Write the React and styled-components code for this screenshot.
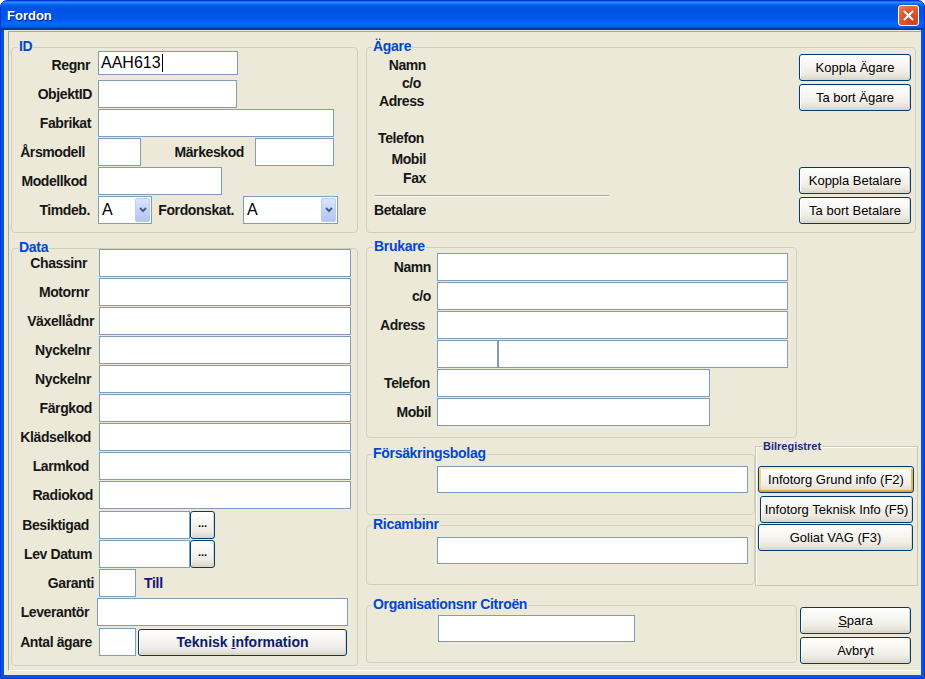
import React from "react";
import styled, { createGlobalStyle } from "styled-components";

const GlobalStyle = createGlobalStyle`
  html, body {
    margin: 0;
    padding: 0;
    background: #ffffff;
    overflow: hidden;
  }
  body {
    font-family: "Liberation Sans", Arial, sans-serif;
  }
`;

const Window = styled.div`
  width: 925px;
  height: 679px;
  box-sizing: border-box;
  display: flex;
  flex-direction: column;
  background: #0055e5;
  border: 1px solid #0831d9;
  border-radius: 7px 7px 0 0;
  overflow: hidden;
  font-family: "Liberation Sans", Arial, sans-serif;
`;

const TitleBar = styled.div`
  flex: none;
  height: 29px;
  display: flex;
  align-items: center;
  justify-content: space-between;
  padding: 0 5px 0 6px;
  background: linear-gradient(
    to bottom,
    #0058ee 0%,
    #3593ff 4%,
    #288eff 6%,
    #127dff 8%,
    #036ffc 10%,
    #0262ee 14%,
    #0057e5 20%,
    #0054e3 24%,
    #0055eb 56%,
    #005bf5 66%,
    #026afe 76%,
    #0062ef 86%,
    #0052d6 92%,
    #0040ab 94%,
    #003092 100%
  );
`;

const Title = styled.span`
  color: #ffffff;
  font-weight: bold;
  font-size: 13px;
  text-shadow: 1px 1px 0 #0a1e6e;
`;

const CloseButton = styled.div`
  width: 21px;
  height: 21px;
  box-sizing: border-box;
  border: 1px solid #ffffff;
  border-radius: 3px;
  background: radial-gradient(circle at 70% 80%, #c9411d 0%, #e0572f 55%, #ec8563 100%);
  display: flex;
  align-items: center;
  justify-content: center;
`;

const Client = styled.div`
  flex: 1;
  display: flex;
  flex-direction: column;
  margin: 0 3px 3px;
  background: #ece9d8;
`;

const Panel = styled.div`
  flex: 1;
  display: flex;
  gap: 8px;
  margin: 1px 0 4px 4px;
  padding: 15px 0 0 2px;
  border-top: 1px solid #aca899;
  border-left: 1px solid #aca899;
  border-bottom: 1px solid #ffffff;
`;

const Column = styled.div`
  width: ${(p) => p.$w}px;
  flex: none;
  display: flex;
  flex-direction: column;
`;

const HStack = styled.div`
  display: flex;
  align-items: flex-start;
  margin-top: ${(p) => p.$mt || 0}px;
`;

const VStack = styled.div`
  display: flex;
  flex-direction: column;
  align-items: flex-start;
  margin-left: ${(p) => p.$ml || 0}px;
  padding-top: ${(p) => p.$pt || 0}px;
`;

const Group = styled.div`
  width: ${(p) => p.$w}px;
  height: ${(p) => p.$h}px;
  box-sizing: border-box;
  flex: none;
  margin-top: ${(p) => p.$mt || 0}px;
  border: 1px solid ${(p) => (p.$square ? "#c9c6b6" : "#d0d0bf")};
  border-radius: ${(p) => (p.$square ? 0 : 4)}px;
  box-shadow: ${(p) => (p.$square ? "inset 1px 1px 0 #ffffff" : "none")};
  display: flex;
  flex-direction: column;
`;

const Legend = styled.div`
  width: fit-content;
  height: ${(p) => (p.$small ? 12 : 14)}px;
  line-height: ${(p) => (p.$small ? 12 : 14)}px;
  margin: ${(p) => (p.$small ? "-7px 0 -5px" : "-9px 0 -5px")} ${(p) => p.$ml}px;
  padding: 0 1px;
  background: #ece9d8;
  font-weight: bold;
  font-size: ${(p) => (p.$small ? 11 : 14)}px;
  letter-spacing: ${(p) => (p.$small ? 0 : -0.3)}px;
  color: ${(p) => (p.$small ? "#1f2a86" : "#0046d5")};
  white-space: nowrap;
`;

const FieldList = styled.div`
  display: flex;
  flex-direction: column;
  gap: 1px;
  padding-top: ${(p) => p.$pt || 0}px;
`;

const Row = styled.div`
  display: flex;
  align-items: center;
  height: 28px;
  margin-top: ${(p) => p.$mt || 0}px;
`;

const Label = styled.span`
  flex: none;
  width: ${(p) => p.$w}px;
  padding-right: ${(p) => p.$pr ?? 7}px;
  box-sizing: border-box;
  text-align: right;
  font-weight: bold;
  font-size: 14px;
  letter-spacing: -0.4px;
  color: #161616;
  white-space: nowrap;
`;

const Note = styled.span`
  margin-left: ${(p) => p.$ml || 0}px;
  font-weight: bold;
  font-size: 14px;
  letter-spacing: -0.3px;
  color: #14147c;
`;

const TextBox = styled.div`
  flex: none;
  width: ${(p) => p.$w}px;
  height: ${(p) => p.$h || 28}px;
  align-self: ${(p) => (p.$top ? "flex-start" : "auto")};
  margin-left: ${(p) => p.$ml || 0}px;
  box-sizing: border-box;
  border: 1px solid #7f9db9;
  background: #ffffff;
  display: flex;
  align-items: center;
  padding-left: 2px;
  font-size: 16px;
  color: #000000;
`;

const Caret = styled.span`
  width: 1px;
  height: 18px;
  margin-left: 1px;
  background: #000000;
`;

const Combo = styled.div`
  flex: none;
  width: ${(p) => p.$w}px;
  height: 28px;
  box-sizing: border-box;
  border: 1px solid #7f9db9;
  background: #ffffff;
  display: flex;
  align-items: stretch;
  padding: 1px;
`;

const ComboValue = styled.span`
  flex: 1;
  display: flex;
  align-items: center;
  padding-left: 2px;
  font-size: 16px;
  color: #000000;
`;

const ComboArrow = styled.span`
  width: 15px;
  box-sizing: border-box;
  border: 1px solid #bccbf4;
  border-radius: 2px;
  background: linear-gradient(to bottom, #dbe5fd 0%, #c4d3fa 50%, #b3c5f4 100%);
  display: flex;
  align-items: center;
  justify-content: center;
`;

const Button = styled.button`
  flex: none;
  width: ${(p) => p.$w}px;
  height: ${(p) => p.$h || 27}px;
  margin: ${(p) => p.$mt || 0}px 0 0 ${(p) => p.$ml || 0}px;
  padding: 0;
  box-sizing: border-box;
  border: 1px solid #003c74;
  border-radius: 3px;
  background: linear-gradient(
    to bottom,
    #ffffff 0%,
    #f8f7f3 35%,
    #efede6 70%,
    #e4e1d6 88%,
    #d6d0c5 100%
  );
  box-shadow: ${(p) =>
    p.$focused
      ? "inset 0 2px 0 #fde7a8, inset 0 -2px 0 #e8a633, inset 2px 0 0 #f9cd70, inset -2px 0 0 #f1b440"
      : "inset 1px 1px 0 #ffffff, inset -1px -1px 0 #dcd7cb"};
  font-family: "Liberation Sans", Arial, sans-serif;
  font-size: ${(p) => (p.$bold ? 14 : 13)}px;
  font-weight: ${(p) => (p.$bold ? "bold" : "normal")};
  color: ${(p) => (p.$bold ? "#0a1c6a" : "#000000")};
  white-space: nowrap;
  cursor: default;
`;

const DotsButton = styled(Button)`
  font-size: 11px;
  font-weight: bold;
  line-height: 8px;
  padding-bottom: 4px;
`;

const OwnerBody = styled.div`
  flex: 1;
  display: flex;
`;

const OwnerInfo = styled.div`
  flex: 1;
  display: flex;
  flex-direction: column;
  align-items: flex-start;
`;

const OwnerLabel = styled.span`
  width: 59px;
  margin-top: ${(p) => p.$mt}px;
  padding-right: ${(p) => p.$pr || 0}px;
  box-sizing: border-box;
  text-align: right;
  line-height: 14px;
  font-weight: bold;
  font-size: 14px;
  letter-spacing: -0.4px;
  color: #161616;
  white-space: nowrap;
`;

const Separator = styled.div`
  width: 234px;
  height: 1px;
  margin: 10px 0 0 8px;
  background: #a7a6a0;
  border-bottom: 1px solid #ffffff;
`;

const ButtonColumn = styled.div`
  display: flex;
  flex-direction: column;
  padding-top: 6px;
  margin-right: 4px;
`;

const Chevron = () => (
  <svg width="8" height="6" viewBox="0 0 8 6">
    <polyline points="1,1 4,4 7,1" fill="none" stroke="#4d6185" strokeWidth="2" />
  </svg>
);

const dataRows = [
  { label: "Chassinr", pr: 12 },
  { label: "Motornr", pr: 10 },
  { label: "Växellådnr", pr: 5 },
  { label: "Nyckelnr", pr: 8 },
  { label: "Nyckelnr", pr: 8 },
  { label: "Färgkod", pr: 7 },
  { label: "Klädselkod", pr: 8 },
  { label: "Larmkod", pr: 10 },
  { label: "Radiokod", pr: 6 },
];

const brukareRows = [
  { label: "Namn", pr: 6, w: 351 },
  { label: "c/o", pr: 6, w: 351 },
  { label: "Adress", pr: 12, w: 351 },
];

const App = () => {
  return (
    <>
      <GlobalStyle />
      <Window>
        <TitleBar>
          <Title>Fordon</Title>
          <CloseButton>
            <svg width="11" height="11" viewBox="0 0 11 11">
              <path d="M1.5 1.5 L9.5 9.5 M9.5 1.5 L1.5 9.5" stroke="#ffffff" strokeWidth="2" strokeLinecap="round" />
            </svg>
          </CloseButton>
        </TitleBar>
        <Client>
          <Panel>
            <Column $w={347}>
              <Group $w={347} $h={186}>
                <Legend $ml={6}>ID</Legend>
                <FieldList $pt={3}>
                  <Row>
                    <Label $w={86} $pr={8}>Regnr</Label>
                    <TextBox $w={140} $h={24} $top>
                      AAH613
                      <Caret />
                    </TextBox>
                  </Row>
                  <Row>
                    <Label $w={86} $pr={6}>ObjektID</Label>
                    <TextBox $w={139} />
                  </Row>
                  <Row>
                    <Label $w={86}>Fabrikat</Label>
                    <TextBox $w={236} />
                  </Row>
                  <Row>
                    <Label $w={86} $pr={13}>Årsmodell</Label>
                    <TextBox $w={43} />
                    <Label $w={114} $pr={11}>Märkeskod</Label>
                    <TextBox $w={79} />
                  </Row>
                  <Row>
                    <Label $w={86} $pr={11}>Modellkod</Label>
                    <TextBox $w={124} />
                  </Row>
                  <Row>
                    <Label $w={86} $pr={8}>Timdeb.</Label>
                    <Combo $w={54}>
                      <ComboValue>A</ComboValue>
                      <ComboArrow>
                        <Chevron />
                      </ComboArrow>
                    </Combo>
                    <Label $w={91} $pr={9}>Fordonskat.</Label>
                    <Combo $w={95}>
                      <ComboValue>A</ComboValue>
                      <ComboArrow>
                        <Chevron />
                      </ComboArrow>
                    </Combo>
                  </Row>
                </FieldList>
              </Group>

              <Group $w={347} $h={418} $mt={15}>
                <Legend $ml={6}>Data</Legend>
                <FieldList>
                  {dataRows.map((r, i) => (
                    <Row key={i}>
                      <Label $w={87} $pr={r.pr}>{r.label}</Label>
                      <TextBox $w={252} />
                    </Row>
                  ))}
                  <Row $mt={1}>
                    <Label $w={87} $pr={10}>Besiktigad</Label>
                    <TextBox $w={91} />
                    <DotsButton $w={25} $h={28}>...</DotsButton>
                  </Row>
                  <Row>
                    <Label $w={87} $pr={7}>Lev Datum</Label>
                    <TextBox $w={91} />
                    <DotsButton $w={25} $h={28}>...</DotsButton>
                  </Row>
                  <Row>
                    <Label $w={87} $pr={5}>Garanti</Label>
                    <TextBox $w={37} />
                    <Note $ml={8}>Till</Note>
                  </Row>
                  <Row>
                    <Label $w={85} $pr={8}>Leverantör</Label>
                    <TextBox $w={251} />
                  </Row>
                  <Row $mt={1}>
                    <Label $w={87} $pr={7}>Antal ägare</Label>
                    <TextBox $w={37} />
                    <Button $w={209} $ml={2} $bold>
                      Teknisk <u>i</u>nformation
                    </Button>
                  </Row>
                </FieldList>
              </Group>
            </Column>

            <Column $w={552}>
              <Group $w={550} $h={186}>
                <Legend $ml={5}>Ägare</Legend>
                <OwnerBody>
                  <OwnerInfo>
                    <OwnerLabel $mt={10}>Namn</OwnerLabel>
                    <OwnerLabel $mt={4} $pr={5}>c/o</OwnerLabel>
                    <OwnerLabel $mt={4} $pr={2}>Adress</OwnerLabel>
                    <OwnerLabel $mt={23} $pr={2}>Telefon</OwnerLabel>
                    <OwnerLabel $mt={7}>Mobil</OwnerLabel>
                    <OwnerLabel $mt={5}>Fax</OwnerLabel>
                    <Separator />
                    <OwnerLabel $mt={6}>Betalare</OwnerLabel>
                  </OwnerInfo>
                  <ButtonColumn>
                    <Button $w={112}>Koppla Ägare</Button>
                    <Button $w={112} $mt={3}>Ta bort Ägare</Button>
                    <Button $w={112} $mt={56}>Koppla Betalare</Button>
                    <Button $w={112} $mt={3}>Ta bort Betalare</Button>
                  </ButtonColumn>
                </OwnerBody>
              </Group>

              <Group $w={431} $h={191} $mt={14}>
                <Legend $ml={6}>Brukare</Legend>
                <FieldList $pt={5}>
                  {brukareRows.map((r, i) => (
                    <Row key={i}>
                      <Label $w={70} $pr={r.pr}>{r.label}</Label>
                      <TextBox $w={r.w} />
                    </Row>
                  ))}
                  <Row>
                    <Label $w={70} />
                    <TextBox $w={61} />
                    <TextBox $w={290} />
                  </Row>
                  <Row>
                    <Label $w={70} $pr={7}>Telefon</Label>
                    <TextBox $w={273} />
                  </Row>
                  <Row>
                    <Label $w={70} $pr={6}>Mobil</Label>
                    <TextBox $w={273} />
                  </Row>
                </FieldList>
              </Group>

              <HStack $mt={8}>
                <VStack>
                  <Group $w={389} $h={61} $mt={8}>
                    <Legend $ml={5}>Försäkringsbolag</Legend>
                    <VStack $ml={70} $pt={11}>
                      <TextBox $w={311} $h={27} />
                    </VStack>
                  </Group>
                  <Group $w={389} $h={60} $mt={10}>
                    <Legend $ml={5}>Ricambinr</Legend>
                    <VStack $ml={70} $pt={11}>
                      <TextBox $w={311} $h={27} />
                    </VStack>
                  </Group>
                </VStack>
                <Group $w={163} $h={140} $square>
                  <Legend $ml={6} $small>Bilregistret</Legend>
                  <VStack $pt={19}>
                    <Button $w={156} $ml={2} $focused>Infotorg Grund info (F2)</Button>
                    <Button $w={153} $ml={4} $mt={3}>Infotorg Teknisk Info (F5)</Button>
                    <Button $w={155} $ml={2} $mt={1}>Goliat VAG (F3)</Button>
                  </VStack>
                </Group>
              </HStack>

              <HStack $mt={19}>
                <Group $w={431} $h={58}>
                  <Legend $ml={5}>Organisationsnr Citroën</Legend>
                  <VStack $ml={71} $pt={9}>
                    <TextBox $w={197} $h={27} />
                  </VStack>
                </Group>
                <VStack $ml={3} $pt={2}>
                  <Button $w={111}>
                    <u>S</u>para
                  </Button>
                  <Button $w={111} $mt={3}>Avbryt</Button>
                </VStack>
              </HStack>
            </Column>
          </Panel>
        </Client>
      </Window>
    </>
  );
};

export default App;
